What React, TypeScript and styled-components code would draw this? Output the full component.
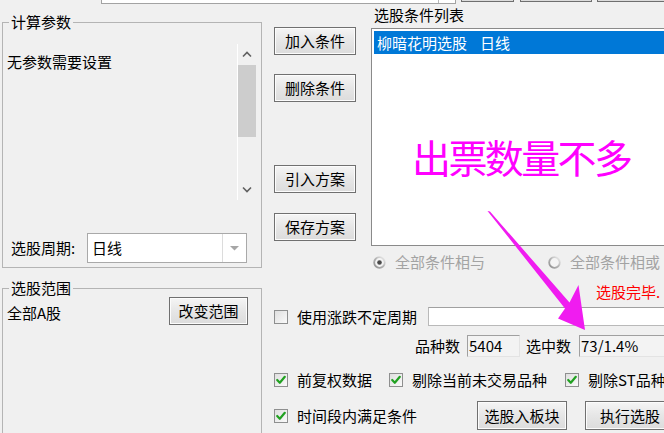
import React from 'react';
import styled, { createGlobalStyle } from 'styled-components';

const GlobalStyle = createGlobalStyle`
  html, body {
    margin: 0;
    padding: 0;
    background: #f0f0f0;
  }
  body {
    font-family: "Noto Sans CJK SC", "Liberation Sans", sans-serif;
    font-size: 15px;
    color: #000;
  }
`;

const Window = styled.div`
  position: relative;
  width: 664px;
  height: 433px;
  overflow: hidden;
  background: #f0f0f0;
  font-family: "Noto Sans CJK SC", "Liberation Sans", sans-serif;
  font-size: 15px;
  line-height: 18px;
  color: #000;
`;

/* strip of controls cut off at the top edge */
const TopStrip = styled.div`
  display: flex;
  align-items: flex-start;
  height: 4px;
`;

const TopEdit = styled.div`
  margin-left: 101px;
  width: 355px;
  height: 4px;
  box-sizing: border-box;
  border: 1px solid #a3a3a3;
  border-top: none;
  background: #fff;
  display: flex;
  justify-content: flex-end;
  flex-shrink: 0;
`;

const TopEditSplit = styled.div`
  width: 16px;
  border-left: 1px solid #b8b8b8;
`;

const TopButton = styled.div<{ $w: number; $ml: number }>`
  width: ${(p) => p.$w}px;
  margin-left: ${(p) => p.$ml}px;
  height: 2px;
  box-sizing: border-box;
  border: 1px solid #6f6f6f;
  border-top: none;
  background: #dcdcdc;
  flex-shrink: 0;
`;

const Body = styled.div`
  display: flex;
  align-items: flex-start;
`;

const LeftCol = styled.div`
  margin-left: 2px;
  width: 260px;
  flex-shrink: 0;
  padding-top: 9px;
  display: flex;
  flex-direction: column;
`;

const Group = styled.fieldset<{ $mt?: number }>`
  margin: ${(p) => p.$mt ?? 0}px 0 0 0;
  padding: 0;
  min-width: 0;
  border: 1px solid #b4b4b4;
`;

const Legend = styled.legend`
  margin-left: 6px;
  padding: 0 2px;
  font-size: 15px;
  line-height: 18px;
`;

const ParamArea = styled.div`
  margin: 13px 5px 0 4px;
  height: 156px;
  display: flex;
`;

const ParamText = styled.div`
  flex: 1;
  padding-top: 9px;
`;

const ScrollBar = styled.div`
  width: 19px;
  box-sizing: border-box;
  border-left: 1px solid #fff;
  display: flex;
  flex-direction: column;
`;

const ScrollArrow = styled.div`
  height: 21px;
  display: flex;
  align-items: center;
  justify-content: center;
`;

const ScrollThumb = styled.div`
  height: 72px;
  background: #cdcdcd;
`;

const ScrollTrack = styled.div`
  flex: 1;
`;

const PeriodRow = styled.div`
  margin: 33px 0 4px 8px;
  height: 30px;
  display: flex;
  align-items: center;
`;

const PeriodLabel = styled.div`
  width: 76px;
`;

const Combo = styled.div`
  width: 160px;
  height: 30px;
  box-sizing: border-box;
  border: 1px solid #a9a9a9;
  background: #fff;
  display: flex;
`;

const ComboText = styled.div`
  flex: 1;
  padding-left: 4px;
  display: flex;
  align-items: center;
`;

const ComboDrop = styled.div`
  width: 23px;
  border-left: 1px solid #dcdcdc;
  display: flex;
  align-items: center;
  justify-content: center;
`;

const RangeRow = styled.div`
  height: 160px;
  display: flex;
  align-items: flex-start;
  padding: 0 13px 0 4px;
`;

const RangeText = styled.div`
  padding-top: 7px;
`;

const Button = styled.div<{ $w: number; $h?: number; $mt?: number; $ml?: number }>`
  width: ${(p) => p.$w}px;
  height: ${(p) => p.$h ?? 28}px;
  margin-top: ${(p) => p.$mt ?? 0}px;
  margin-left: ${(p) => (p.$ml === undefined ? '0' : `${p.$ml}px`)};
  box-sizing: border-box;
  flex-shrink: 0;
  border: 1px solid #707070;
  background: linear-gradient(#f5f5f5, #e6e6e6 50%, #dcdcdc);
  box-shadow: inset 0 0 0 1px #fcfcfc;
  display: flex;
  align-items: center;
  justify-content: center;
  font-size: 15px;
`;

const RangeButton = styled(Button)`
  margin-left: auto;
`;

const MainCol = styled.div`
  margin-left: 12px;
  width: 420px;
  flex-shrink: 0;
  display: flex;
  flex-direction: column;
`;

const TopPart = styled.div`
  display: flex;
  align-items: flex-start;
`;

const ButtonCol = styled.div`
  width: 82px;
  flex-shrink: 0;
  padding-top: 23px;
  display: flex;
  flex-direction: column;
`;

const ListCol = styled.div`
  margin-left: 15px;
  width: 320px;
  flex-shrink: 0;
  display: flex;
  flex-direction: column;
`;

const ListLabel = styled.div`
  padding: 2px 0 0 3px;
`;

const ListBox = styled.div`
  position: relative;
  margin-top: 4px;
  height: 218px;
  box-sizing: border-box;
  border: 1px solid #8a8a8a;
  background: #fff;
  padding: 2px 0 0 2px;
`;

const ListRow = styled.div<{ $selected?: boolean }>`
  height: 23px;
  line-height: 23px;
  padding-left: 3px;
  background: ${(p) => (p.$selected ? '#0078d7' : 'transparent')};
  color: ${(p) => (p.$selected ? '#fff' : '#000')};
`;

const Gap = styled.span`
  margin-left: 13px;
`;

const Annotation = styled.div`
  position: absolute;
  left: 40px;
  top: 108px;
  font-size: 39px;
  line-height: 39px;
  color: #ff00ff;
  white-space: nowrap;
  letter-spacing: -2.6px;
`;

const RadioRow = styled.div`
  margin: 7px 0 0 99px;
  height: 18px;
  display: flex;
  align-items: center;
  color: #a3a3a3;
`;

const RadioItem = styled.div<{ $w?: number }>`
  width: ${(p) => (p.$w ? `${p.$w}px` : 'auto')};
  display: flex;
  align-items: center;
  gap: 9px;
  white-space: nowrap;
  flex-shrink: 0;
`;

const StatusRow = styled.div`
  margin: 12px 0 0 322px;
  height: 18px;
  color: #ff0000;
  white-space: nowrap;
`;

const FormRow = styled.div<{ $mt: number; $h: number; $ml?: number }>`
  margin: ${(p) => p.$mt}px 0 0 ${(p) => p.$ml ?? 0}px;
  height: ${(p) => p.$h}px;
  display: flex;
  align-items: center;
  white-space: nowrap;
`;

const CheckItem = styled.div<{ $mr?: number }>`
  display: flex;
  align-items: center;
  gap: 9px;
  margin-right: ${(p) => p.$mr ?? 0}px;
  flex-shrink: 0;
`;

const WhiteEdit = styled.div`
  margin-left: 11px;
  width: 300px;
  height: 19px;
  box-sizing: border-box;
  border: 1px solid #b9b9b9;
  border-top-color: #a0a0a0;
  background: #fff;
  flex-shrink: 0;
`;

const ReadField = styled.div<{ $w: number; $ml: number }>`
  width: ${(p) => p.$w}px;
  margin-left: ${(p) => p.$ml}px;
  height: 22px;
  box-sizing: border-box;
  border: 1px solid #e3e3e3;
  border-top-color: #a0a0a0;
  border-left-color: #a0a0a0;
  background: #f3f3f3;
  padding-left: 1px;
  display: flex;
  align-items: center;
  flex-shrink: 0;
`;

const FieldLabel = styled.div<{ $ml?: number }>`
  margin-left: ${(p) => p.$ml ?? 0}px;
  flex-shrink: 0;
`;

const Overlay = styled.svg`
  position: absolute;
  left: 0;
  top: 0;
  pointer-events: none;
`;

const Chevron = ({ up }: { up?: boolean }) => (
  <svg width="10" height="7" viewBox="0 0 10 7">
    <polyline
      points={up ? '1,5.5 5,1.5 9,5.5' : '1,1.5 5,5.5 9,1.5'}
      fill="none"
      stroke="#606060"
      strokeWidth="1.6"
    />
  </svg>
);

const DropTriangle = () => (
  <svg width="9" height="5" viewBox="0 0 9 5">
    <polygon points="0,0 9,0 4.5,4.5" fill="#a6a6a6" />
  </svg>
);

const CheckBox = ({ checked }: { checked?: boolean }) => (
  <svg width="14" height="14" viewBox="0 0 14 14">
    <defs>
      <linearGradient id="cbFill" x1="0" y1="0" x2="1" y2="1">
        <stop offset="0" stopColor="#dedede" />
        <stop offset="1" stopColor="#fbfbfb" />
      </linearGradient>
    </defs>
    <rect x="0.5" y="0.5" width="13" height="13" fill="url(#cbFill)" stroke="#8e8f8f" />
    {checked && (
      <polyline
        points="3.2,7 5.8,9.8 10.8,3.8"
        fill="none"
        stroke="#21a121"
        strokeWidth="2.2"
        strokeLinecap="round"
        strokeLinejoin="round"
      />
    )}
  </svg>
);

const Radio = ({ selected }: { selected?: boolean }) => (
  <svg width="13" height="13" viewBox="0 0 13 13">
    <defs>
      <linearGradient id="rdRing" x1="0" y1="1" x2="1" y2="0">
        <stop offset="0" stopColor="#8e8e8e" />
        <stop offset="0.55" stopColor="#b9b9b9" />
        <stop offset="1" stopColor="#f0f0f0" />
      </linearGradient>
    </defs>
    <circle cx="6.5" cy="6.5" r="5.3" fill="#f4f4f4" stroke="url(#rdRing)" strokeWidth="1.8" />
    {selected && <circle cx="6.5" cy="6.5" r="2.3" fill="#4a4a4a" />}
  </svg>
);

export default function App() {
  return (
    <>
      <GlobalStyle />
      <Window>
        <TopStrip>
          <TopEdit>
            <TopEditSplit />
          </TopEdit>
          <TopButton $w={53} $ml={5} />
          <TopButton $w={72} $ml={6} />
          <TopButton $w={100} $ml={5} />
        </TopStrip>

        <Body>
          <LeftCol>
            <Group>
              <Legend>计算参数</Legend>
              <ParamArea>
                <ParamText>无参数需要设置</ParamText>
                <ScrollBar>
                  <ScrollArrow>
                    <Chevron up />
                  </ScrollArrow>
                  <ScrollThumb />
                  <ScrollTrack />
                  <ScrollArrow>
                    <Chevron />
                  </ScrollArrow>
                </ScrollBar>
              </ParamArea>
              <PeriodRow>
                <PeriodLabel>选股周期:</PeriodLabel>
                <Combo>
                  <ComboText>日线</ComboText>
                  <ComboDrop>
                    <DropTriangle />
                  </ComboDrop>
                </Combo>
              </PeriodRow>
            </Group>

            <Group $mt={11}>
              <Legend>选股范围</Legend>
              <RangeRow>
                <RangeText>全部A股</RangeText>
                <RangeButton $w={79}>改变范围</RangeButton>
              </RangeRow>
            </Group>
          </LeftCol>

          <MainCol>
            <TopPart>
              <ButtonCol>
                <Button $w={82}>加入条件</Button>
                <Button $w={82} $mt={19}>删除条件</Button>
                <Button $w={82} $mt={63}>引入方案</Button>
                <Button $w={82} $mt={20}>保存方案</Button>
              </ButtonCol>
              <ListCol>
                <ListLabel>选股条件列表</ListLabel>
                <ListBox>
                  <ListRow $selected>
                    柳暗花明选股<Gap>日线</Gap>
                  </ListRow>
                  <Annotation>出票数量不多</Annotation>
                </ListBox>
              </ListCol>
            </TopPart>

            <RadioRow>
              <RadioItem $w={175}>
                <Radio selected />
                全部条件相与
              </RadioItem>
              <RadioItem>
                <Radio />
                全部条件相或
              </RadioItem>
            </RadioRow>

            <StatusRow>选股完毕.</StatusRow>

            <FormRow $mt={6} $h={19}>
              <CheckItem>
                <CheckBox />
                使用涨跌不定周期
              </CheckItem>
              <WhiteEdit />
            </FormRow>

            <FormRow $mt={9} $h={22} $ml={141}>
              <FieldLabel>品种数</FieldLabel>
              <ReadField $w={53} $ml={7}>5404</ReadField>
              <FieldLabel $ml={6}>选中数</FieldLabel>
              <ReadField $w={100} $ml={8}>73/1.4%</ReadField>
            </FormRow>

            <FormRow $mt={13} $h={19}>
              <CheckItem $mr={17}>
                <CheckBox checked />
                前复权数据
              </CheckItem>
              <CheckItem $mr={18}>
                <CheckBox checked />
                剔除当前未交易品种
              </CheckItem>
              <CheckItem>
                <CheckBox checked />
                剔除ST品种
              </CheckItem>
            </FormRow>

            <FormRow $mt={12} $h={29}>
              <CheckItem>
                <CheckBox checked />
                时间段内满足条件
              </CheckItem>
              <Button $w={90} $h={29} $ml={60}>选股入板块</Button>
              <Button $w={90} $h={29} $ml={18}>执行选股</Button>
            </FormRow>
          </MainCol>
        </Body>

        <Overlay width="664" height="433" viewBox="0 0 664 433">
          <polygon
            points="487.5,211 490,211.5 569.5,302.5 578.5,285 585,330 558,318.5 565,308.5"
            fill="#f01cf0"
          />
        </Overlay>
      </Window>
    </>
  );
}
